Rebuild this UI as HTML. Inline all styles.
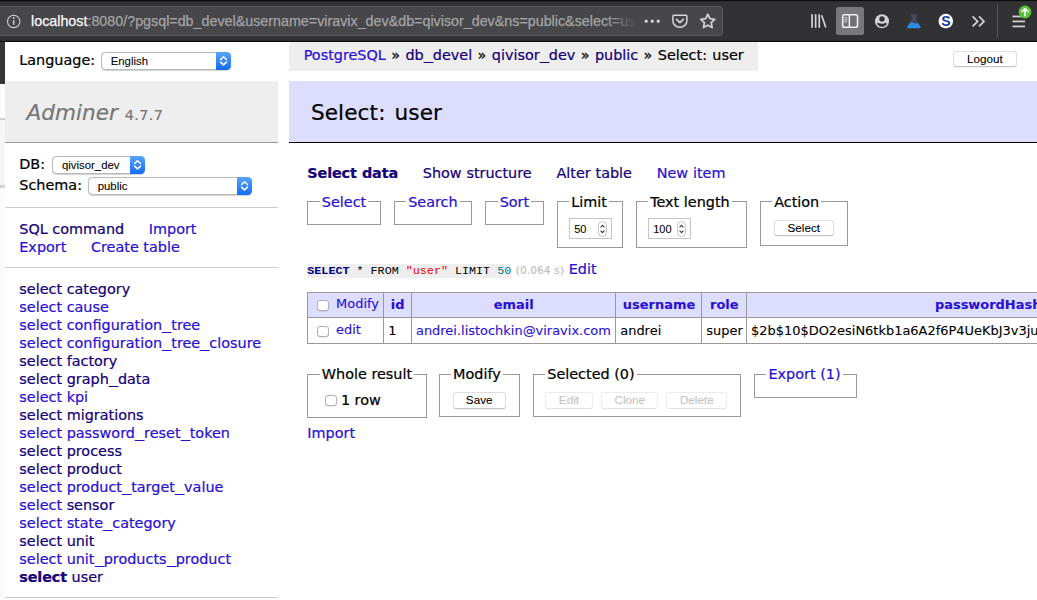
<!DOCTYPE html>
<html lang="en">
<head>
<meta charset="utf-8">
<title>Select: user - qivisor_dev - Adminer</title>
<style>
html { margin: 0; padding: 0; overflow: hidden; background: #fff; }
body { margin: 0; padding: 0; width: 1037px; height: 600px; overflow: hidden; position: relative; background: #fff; }

/* ---------- browser chrome ---------- */
#chrome { position: absolute; left: 0; top: 0; width: 1037px; height: 42px; background: #323234; font-family: "Liberation Sans", sans-serif; overflow: hidden; z-index: 10; }
#chrome .tabstrip { position: absolute; left: 0; top: 0; width: 1037px; height: 2px; background: #0c0c0d; }
#chrome .bottomline { position: absolute; left: 0; top: 40px; width: 1037px; height: 2px; background: #0c0c0d; }
#urlbar { position: absolute; left: -4px; top: 6px; width: 726px; height: 30px; background: #474749; border: 1px solid #5a5a5c; border-radius: 3px; box-sizing: border-box; }
#url { position: absolute; left: 31px; top: 12px; font-size: 15px; line-height: 18px; color: #b1b1b3; white-space: nowrap; width: 605px; overflow: hidden; }
#url b { color: #f9f9fa; font-weight: normal; }
#urlfade { position: absolute; left: 596px; top: 8px; width: 40px; height: 26px; background: linear-gradient(to right, rgba(71,71,73,0), #474749); }
.cicon { position: absolute; }

/* ---------- left strip ---------- */
#strip { position: absolute; left: 0; top: 42px; width: 4.8px; height: 558px; z-index: 9; background: linear-gradient(to bottom, #35353a 0, #35353a 42.4px, #fdfdfd 42.4px, #fdfdfd 76.5px, #cfcfcf 76.5px, #cfcfcf 77.5px, #f6f6f6 77.5px, #f6f6f6 143px, #d4d4d4 143px, #d4d4d4 146.4px, #fbfbfb 146.4px, #fbfbfb 100%); }

/* ---------- adminer page ---------- */
#page { position: absolute; left: 4.9px; top: 42px; width: 1400px; height: 558px; color: #000; background: #fff; font: 14.4px/1.25 "DejaVu Sans", "Liberation Sans", sans-serif; -webkit-text-stroke: 0.22px; }
#page a { color: #2a10d4; text-decoration: none; }
#page a.v { color: #140078; }
h1 { font-size: 150%; margin: 0; padding: calc(.8em + 1.7px) 1em calc(.8em - 1.7px); border-bottom: 1px solid #999; font-weight: normal; color: #777; background: #eee; }
h2 { font-size: 150%; margin: 0 0 20px -18px; padding: calc(.8em + 2px) 1em calc(.8em - 2px); word-spacing: 2px; letter-spacing: 0.12px; border-bottom: 1px solid #000; color: #000; font-weight: normal; background: #ddf; }
form { margin: 0; }
table { margin: calc(1em + 0.2px) 20px 0 0; border-collapse: collapse; font-size: 90%; table-layout: fixed; width: 921.9px; -webkit-text-stroke: 0.12px; }
td, th { border: 1px solid #999; padding: calc(.2em + .7px) .3em calc(.2em - .7px); white-space: pre; overflow: hidden; }
th { background: #eee; text-align: left; }
thead th { text-align: center; padding: calc(.2em + .7px) .5em calc(.2em - .7px); }
thead tr { height: 25px; }
tbody tr { height: 26.7px; }
tbody td { padding-top: calc(.2em + 1.1px); }
thead td, thead th { background: #ddf; }
fieldset { display: inline-block; vertical-align: top; padding: .5em .8em; margin: .8em 8.4px 0 0; border: 1px solid #999; border-radius: 0; min-width: 0; }
legend { padding: 0 2px; }
p { margin: .8em 20px 0 0; }
code { -webkit-text-stroke: 0; background: #eee; font: 11.72px/1.25 "Liberation Mono", monospace; }
.footer fieldset { margin-top: 21.2px; }
.time { color: silver; font-size: 70%; letter-spacing: 0.35px; }
.active { font-weight: bold; letter-spacing: -0.12px; }
#content > p.links { position: relative; top: 0.9px; word-spacing: 0.2px; }
.links a { white-space: nowrap; margin-right: 20px; }
.logout { margin-top: .5em; position: absolute; top: 0; left: 948px; }
.version { color: #777; font-size: 67%; letter-spacing: 0.4px; }
#menu { position: absolute; margin: 10px 0 0; padding: 0 0 30px 0; top: 2em; left: 0; width: 19em; }
#menu p, #dbs, #tables { padding: .8em 1em; margin: 0; border-bottom: 1px solid #ccc; }
#tables li { list-style: none; }
#tables { white-space: nowrap; overflow: hidden; }
#content { margin: 2em 0 0 21em; padding: 10px 20px 20px 0; width: 1080px; }
.u { display: inline-block; width: 1.27em; transform: scaleX(1.27); transform-origin: 0 0; width: 0.636em; }
#lang { position: absolute; top: 1.7px; left: 0; line-height: 1.8em; padding: .3em 1em; }
#breadcrumb { white-space: nowrap; position: absolute; top: 0; left: 21em; background: #eee; height: calc(2em - 1.4px); line-height: 1.8em; padding: 1.4px 1em 0; margin: 0 0 0 -18px; word-spacing: 0.8px; }
#page a#h1 { color: #777; text-decoration: none; font-style: italic; }

/* fake mac controls */
.sel { display: inline-block; vertical-align: middle; position: relative; height: 15.8px; border: 1px solid #b9b9b9; border-radius: 4.5px; background: #fff; font: 11.4px/15.8px "Liberation Sans", sans-serif; color: #000; box-sizing: content-box; box-shadow: 0 0.5px 0.8px rgba(0,0,0,.18); }
.sel > span { position: absolute; left: 8.6px; top: 1.1px; }
.sel .u { display: inline; transform: none; width: auto; }
.sel svg { position: absolute; right: -1px; top: -1px; }
.btn, .sel, .num { -webkit-text-stroke: 0.08px; }
.row { position: relative; white-space: nowrap; }
.row .sel { position: absolute; top: 0; }
.btn { display: inline-block; vertical-align: middle; height: 14.4px; border: 1px solid #dedede; border-bottom-color: #c6c6c6; border-radius: 3.5px; background: #fff; font: 11.7px/14.4px "Liberation Sans", sans-serif; color: #000; text-align: center; box-shadow: 0 0.5px 0.5px rgba(0,0,0,.12); }
.btn.dis { color: #c2c2c2; border-color: #ececec; border-bottom-color: #e2e2e2; box-shadow: none; }
fieldset.empty { padding-bottom: calc(.5em - 1px); }
.cb { display: inline-block; vertical-align: middle; width: 9.6px; height: 9.6px; border: 1px solid #b0b0b0; border-radius: 3px; background: #fff; margin: 0 3px 0 4.9px; box-shadow: 0 0.5px 0.5px rgba(0,0,0,.15); }
td:first-child a { position: relative; top: -0.8px; left: 0.3px; }
.num { display: inline-block; vertical-align: middle; position: relative; width: 43px; height: 21.4px; border: 1px solid #c6c6c6; background: #fff; font: 11px/20px "Liberation Sans", sans-serif; box-sizing: border-box; }
.num span { position: absolute; left: 4px; top: 0; }
.num svg { position: absolute; right: 4px; top: 2px; }
</style>
</head>
<body>

<div id="chrome">
<svg width="1037" height="42" viewBox="0 0 1037 42" style="position:absolute;left:0;top:0">
  <rect x="0" y="0" width="1037" height="42" fill="#323234"/>
  <rect x="0" y="0" width="1037" height="1.2" fill="#0c0c0d"/>
  <rect x="0" y="40.8" width="1037" height="1.2" fill="#0c0c0d"/>
  <!-- url bar -->
  <rect x="-6" y="6.5" width="728.5" height="29" rx="3" fill="#474749" stroke="#5c5c5e" stroke-width="1"/>
  <!-- info icon -->
  <circle cx="13.7" cy="21.4" r="6.2" fill="none" stroke="#d2d2d4" stroke-width="1.1"/>
  <rect x="13" y="20.2" width="1.4" height="4.6" fill="#d2d2d4"/>
  <circle cx="13.7" cy="18" r="0.95" fill="#d2d2d4"/>
  <!-- url text -->
  <text x="31" y="26.4" font-family="Liberation Sans, sans-serif" font-size="14.3" fill="#a4a4a6" stroke="#a4a4a6" stroke-width="0.25"><tspan fill="#f9f9fa" stroke="#f9f9fa">localhost</tspan>:8080/?pgsql=db_devel&amp;username=viravix_dev&amp;db=qivisor_dev&amp;ns=public&amp;select=us</text>
  <defs><linearGradient id="fade" x1="0" x2="1" y1="0" y2="0"><stop offset="0" stop-color="#474749" stop-opacity="0"/><stop offset="1" stop-color="#474749" stop-opacity="1"/></linearGradient></defs>
  <rect x="606" y="9" width="30" height="24" fill="url(#fade)"/>
  <rect x="636" y="9" width="84" height="24" fill="#474749"/>
  <!-- page actions dots -->
  <circle cx="646.2" cy="21.2" r="1.6" fill="#d4d4d6"/><circle cx="652.2" cy="21.2" r="1.6" fill="#d4d4d6"/><circle cx="658.2" cy="21.2" r="1.6" fill="#d4d4d6"/>
  <!-- pocket -->
  <path d="M673.9 15.3 h12 a1 1 0 0 1 1 1 v4.4 a7 6.6 0 0 1 -14 0 v-4.4 a1 1 0 0 1 1 -1 z" fill="none" stroke="#d4d4d6" stroke-width="1.5"/>
  <path d="M676.6 19.4 l3.3 3.2 l3.3 -3.2" fill="none" stroke="#d4d4d6" stroke-width="1.6" stroke-linecap="round" stroke-linejoin="round"/>
  <!-- star -->
  <path d="M707.8 14.2 l2.1 4.5 l4.9 0.6 l-3.6 3.4 l0.95 4.9 l-4.35 -2.4 l-4.35 2.4 l0.95 -4.9 l-3.6 -3.4 l4.9 -0.6 z" fill="none" stroke="#d0d0d2" stroke-width="1.75" stroke-linejoin="round"/>
  <!-- library -->
  <rect x="811.2" y="14.2" width="1.7" height="13.6" fill="#d4d4d6"/><rect x="814.8" y="14.2" width="1.7" height="13.6" fill="#d4d4d6"/><rect x="818.4" y="14.2" width="1.7" height="13.6" fill="#d4d4d6"/>
  <path d="M821.6 15.2 l4.2 12.4" stroke="#d4d4d6" stroke-width="1.7" fill="none"/>
  <!-- sidebar button (active) -->
  <rect x="836" y="7" width="28" height="28" rx="2.5" fill="#78787a"/>
  <rect x="842.7" y="14.8" width="14.8" height="12.4" rx="1.8" fill="#707072" stroke="#f0f0f2" stroke-width="1.6"/>
  <rect x="848.6" y="15" width="1.5" height="12" fill="#f0f0f2"/>
  <rect x="844.4" y="17.3" width="3" height="1" fill="#f0f0f2"/><rect x="844.4" y="19.4" width="3" height="1" fill="#f0f0f2"/><rect x="844.4" y="21.5" width="2.2" height="1" fill="#f0f0f2"/>
  <!-- account -->
  <circle cx="882" cy="21.2" r="7" fill="#d4d4d6"/>
  <circle cx="882" cy="18.9" r="2.7" fill="#323234"/>
  <path d="M877.7 22.6 q4.3 2.4 8.6 0 q0.6 1 0.3 2 a5.6 5.6 0 0 1 -9.2 0 q-0.3 -1 0.3 -2 z" fill="#323234"/>
  <!-- flask -->
  <path d="M910.8 14.2 h6.2 v1.2 h-0.8 v4.2 l4.3 7 a1.1 1.1 0 0 1 -0.95 1.7 h-11.3 a1.1 1.1 0 0 1 -0.95 -1.7 l4.3 -7 v-4.2 h-0.8 z" fill="#45485a"/>
  <path d="M909.8 23 q2 -1.3 4.1 0 t4.1 0 l2.5 3.8 a1 1 0 0 1 -0.9 1.5 h-11.4 a1 1 0 0 1 -0.9 -1.5 z" fill="#2d8be0"/>
  <!-- S -->
  <circle cx="945.8" cy="21.1" r="7.3" fill="#fff"/>
  <text x="945.8" y="26.2" text-anchor="middle" font-family="Liberation Sans, sans-serif" font-weight="bold" font-size="14" fill="#173a9e">S</text>
  <!-- overflow chevrons -->
  <path d="M972.6 16.4 l5 5 l-5 5 M979 16.4 l5 5 l-5 5" fill="none" stroke="#d4d4d6" stroke-width="1.7"/>
  <!-- separator -->
  <rect x="997" y="4.5" width="1" height="33" fill="#58585a"/>
  <!-- hamburger -->
  <rect x="1012.5" y="15.6" width="12.5" height="1.7" fill="#d4d4d6"/><rect x="1012.5" y="20.6" width="12.5" height="1.7" fill="#d4d4d6"/><rect x="1012.5" y="25.6" width="12.5" height="1.7" fill="#d4d4d6"/>
  <circle cx="1025" cy="12" r="6.4" fill="#58c03a"/>
  <path d="M1025 15.8 v-7 M1021.9 11.6 l3.1 -3.1 l3.1 3.1" fill="none" stroke="#fff" stroke-width="1.6" stroke-linecap="round" stroke-linejoin="round"/>
</svg>
</div>

<div id="strip"></div>

<div id="page">

<div id="content">
<p id="breadcrumb"><a>PostgreSQL</a> » <a class="v">db<span class="u">_</span>devel</a> » <a class="v">qivisor<span class="u">_</span>dev</a> » <a class="v">public</a> » Select: user</p>
<h2>Select: user</h2>
<p class="links"><a class="v active">Select data</a> <a class="v">Show structure</a> <a class="v">Alter table</a> <a>New item</a></p>
<form>
<fieldset class="empty"><legend><a>Select</a></legend><div style="width:47.5px;height:0"></div></fieldset> <fieldset class="empty"><legend><a>Search</a></legend><div style="width:53px;height:0"></div></fieldset> <fieldset class="empty"><legend><a>Sort</a></legend><div style="width:32.5px;height:0"></div></fieldset> <fieldset><legend>Limit</legend><div style="width:41px;height:22px"><span class="num"><span>50</span><svg width="9" height="16" viewBox="0 0 9 16"><rect x=".5" y=".5" width="8" height="15" rx="4" fill="#fff" stroke="#c4c4c4"/><path d="M2.6 6.4 L4.5 4.4 L6.4 6.4 M2.6 9.6 L4.5 11.6 L6.4 9.6" stroke="#3a3a3a" fill="none" stroke-width="1.1"/></svg></span></div></fieldset> <fieldset><legend>Text length</legend><div style="width:86px;height:22px"><span class="num"><span>100</span><svg width="9" height="16" viewBox="0 0 9 16"><rect x=".5" y=".5" width="8" height="15" rx="4" fill="#fff" stroke="#c4c4c4"/><path d="M2.6 6.4 L4.5 4.4 L6.4 6.4 M2.6 9.6 L4.5 11.6 L6.4 9.6" stroke="#3a3a3a" fill="none" stroke-width="1.1"/></svg></span></div></fieldset> <fieldset><legend>Action</legend><div style="width:63px;height:20px"><span class="btn" style="width:58.4px;margin-left:1.4px">Select</span></div></fieldset>
</form>
<p><code><b style="color:#000080">SELECT</b> * FROM <span style="color:#e00">"user"</span> LIMIT <span style="color:#007f7f">50</span></code> <span class="time">(0.064 s)</span> <a>Edit</a></p>
<form>
<table cellspacing="0">
<colgroup><col style="width:76px"><col style="width:27.8px"><col style="width:204.3px"><col style="width:86.1px"><col style="width:44.7px"><col style="width:483px"></colgroup>
<thead><tr><td><span class="cb"></span> <a>Modify</a></td><th><a>id</a></th><th><a>email</a></th><th><a>username</a></th><th><a>role</a></th><th><a>passwordHash</a></th></tr></thead>
<tbody><tr><td><span class="cb"></span> <a>edit</a></td><td>1</td><td><a>andrei.listochkin@viravix.com</a></td><td>andrei</td><td>super</td><td>$2b$10$DO2esiN6tkb1a6A2f6P4UeKbJ3v3juAq8mVn1dYc2oX5uQe7K9LhW</td></tr></tbody>
</table>
<div class="footer">
<fieldset style="margin-right:7.4px"><legend>Whole result</legend><div style="width:94px;height:19.4px"><span class="cb" style="margin:0 4px 0 5.5px"></span>1 row</div></fieldset> <fieldset><legend>Modify</legend><div style="width:56.2px;height:18.4px"><span class="btn" style="width:51px;margin-left:1.6px">Save</span></div></fieldset> <fieldset><legend>Selected (0)</legend><div style="width:183.2px;height:18.4px"><span class="btn dis" style="width:45.3px">Edit</span><span class="btn dis" style="width:55px;margin-left:8.7px">Clone</span><span class="btn dis" style="width:58.7px;margin-left:8.2px">Delete</span></div></fieldset> <fieldset class="empty"><legend><a>Export (1)</a></legend><div style="width:78.3px;height:0px"></div></fieldset>
</div>
</form>
<p style="margin-top:6.2px"><a>Import</a></p>
</div>

<div id="lang"><div class="row" style="height:26px">Language: <span class="sel" style="left:81.8px;top:4.3px;width:128px"><span>English</span><svg width="15" height="18" viewBox="0 0 15 18"><defs><linearGradient id="capg" x1="0" x2="0" y1="0" y2="1"><stop offset="0" stop-color="#59a5fb"/><stop offset="1" stop-color="#146cf6"/></linearGradient></defs><path d="M0 0 h10.5 a4.5 4.5 0 0 1 4.5 4.5 v9 a4.5 4.5 0 0 1 -4.5 4.5 h-10.5 z" fill="url(#capg)"/><path d="M4.6 7.5 L7.5 4.7 L10.4 7.5 M4.6 10.1 L7.5 12.9 L10.4 10.1" fill="none" stroke="#fff" stroke-width="1.5" stroke-linecap="round" stroke-linejoin="round"/></svg></span></div></div>
<div class="logout"><span class="btn" style="width:62px">Logout</span></div>

<div id="menu">
<h1><a id="h1">Adminer</a> <span class="version">4.7.7</span></h1>
<div id="dbs"><div class="row" style="height:21px;line-height:18px">DB: <span class="sel" style="left:33px;top:1.4px;width:90.6px"><span>qivisor<span class="u">_</span>dev</span><svg width="15" height="18" viewBox="0 0 15 18"><path d="M0 0 h10.5 a4.5 4.5 0 0 1 4.5 4.5 v9 a4.5 4.5 0 0 1 -4.5 4.5 h-10.5 z" fill="url(#capg)"/><path d="M4.6 7.5 L7.5 4.7 L10.4 7.5 M4.6 10.1 L7.5 12.9 L10.4 10.1" fill="none" stroke="#fff" stroke-width="1.5" stroke-linecap="round" stroke-linejoin="round"/></svg></span></div><div class="row" style="height:20px;line-height:18px">Schema: <span class="sel" style="left:68.8px;top:1.4px;width:161.5px"><span>public</span><svg width="15" height="18" viewBox="0 0 15 18"><path d="M0 0 h10.5 a4.5 4.5 0 0 1 4.5 4.5 v9 a4.5 4.5 0 0 1 -4.5 4.5 h-10.5 z" fill="url(#capg)"/><path d="M4.6 7.5 L7.5 4.7 L10.4 7.5 M4.6 10.1 L7.5 12.9 L10.4 10.1" fill="none" stroke="#fff" stroke-width="1.5" stroke-linecap="round" stroke-linejoin="round"/></svg></span></div></div>
<p class="links"><a class="v">SQL command</a> <a>Import</a><br><a>Export</a> <a>Create table</a></p>
<ul id="tables">
<li><a class="v">select</a> <a class="v">category</a></li>
<li><a>select</a> <a>cause</a></li>
<li><a>select</a> <a>configuration<span class="u">_</span>tree</a></li>
<li><a>select</a> <a>configuration<span class="u">_</span>tree<span class="u">_</span>closure</a></li>
<li><a class="v">select</a> <a class="v">factory</a></li>
<li><a class="v">select</a> <a class="v">graph<span class="u">_</span>data</a></li>
<li><a>select</a> <a>kpi</a></li>
<li><a class="v">select</a> <a class="v">migrations</a></li>
<li><a>select</a> <a>password<span class="u">_</span>reset<span class="u">_</span>token</a></li>
<li><a class="v">select</a> <a class="v">process</a></li>
<li><a class="v">select</a> <a class="v">product</a></li>
<li><a>select</a> <a>product<span class="u">_</span>target<span class="u">_</span>value</a></li>
<li><a>select</a> <a class="v">sensor</a></li>
<li><a>select</a> <a>state<span class="u">_</span>category</a></li>
<li><a class="v">select</a> <a class="v">unit</a></li>
<li><a>select</a> <a>unit<span class="u">_</span>products<span class="u">_</span>product</a></li>
<li><a class="v active">select</a> <a class="v">user</a></li>
</ul>
</div>

</div>
</body>
</html>
